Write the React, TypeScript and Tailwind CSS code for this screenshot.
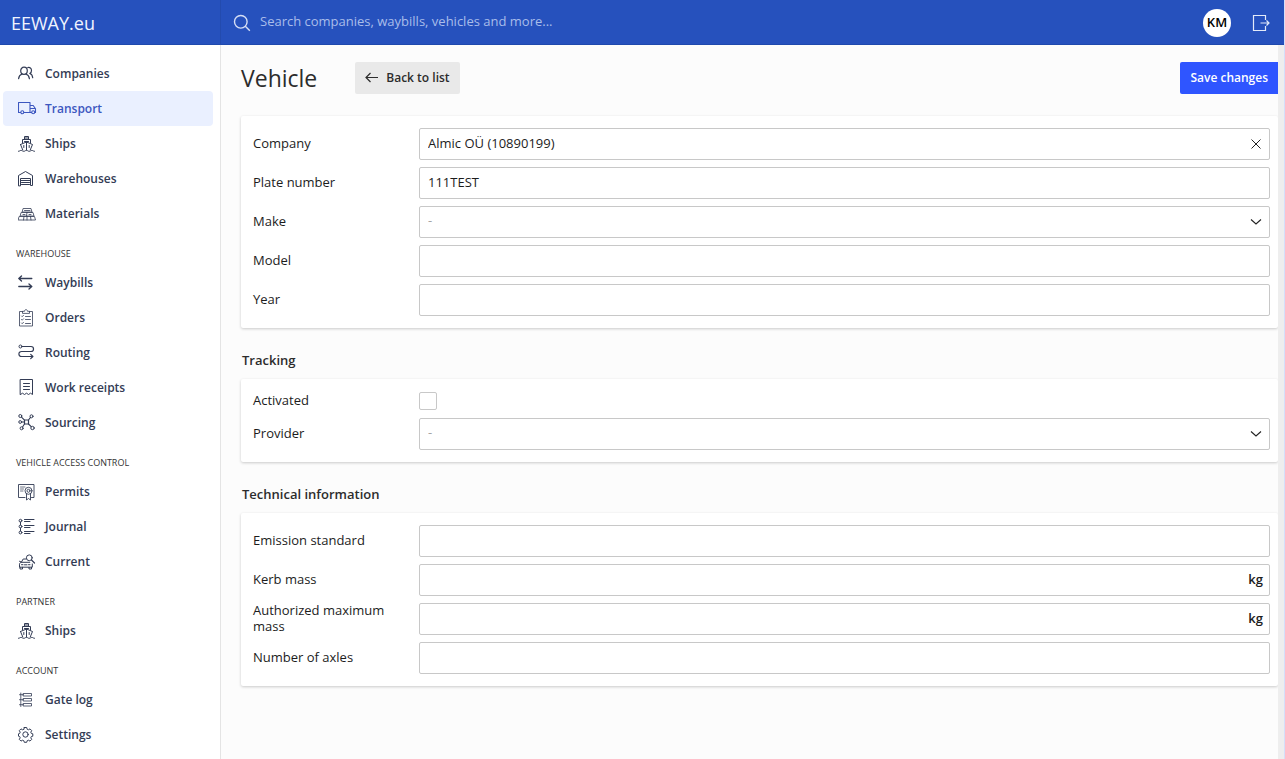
import React, { useState } from 'react';

type NavItem = {
   label: string;
   icon: React.ReactNode;
   active?: boolean;
};

type NavGroup = {
   title?: string;
   items: NavItem[];
};

const NavIcon = ({ children }: { children: React.ReactNode }) => (
   <svg
      className="h-[19px] w-[19px] shrink-0"
      viewBox="0 0 19 19"
      fill="none"
      stroke="currentColor"
      strokeWidth="1"
      strokeLinecap="round"
      strokeLinejoin="round"
      aria-hidden="true"
   >
      {children}
   </svg>
);

const CompaniesIcon = () => (
   <NavIcon>
      <ellipse cx="6" cy="6.8" rx="3.3" ry="3.6" strokeWidth="1.2" />
      <path
         d="M.6 14.6c.3-2.6 1.8-4 3.6-4.6M7.8 10c1.900.6 3.3 2 3.6 4.6M9.800 3.5c2-.6 3.7.8 3.7 2.9 0 1.4-.7 2.6-1.7 3.1 1.7.4 2.7 2 2.9 4.2"
         strokeWidth="1.2"
      />
   </NavIcon>
);

const TransportIcon = () => (
   <NavIcon>
      <path d="M2.5 13.500h-2v-10h11.500v10H6M12 6.500h3.200l2.300 3.300v3.700h-.6M12 9.500h5M13.500 13.500H12" strokeWidth="1.1" />
      <circle cx="4.300" cy="13.300" r="1.500" strokeWidth="1.1" />
      <circle cx="15.200" cy="13.300" r="1.500" strokeWidth="1.1" />
   </NavIcon>
);

const ShipIcon = () => (
   <NavIcon>
      <path d="M6.500 5.500v-3h4v3M6.500 4h4M4.500 8.800V5.500h8v3.300M8.500 8v8M2.500 10.500 8.500 8l6 2.500-2.200 5.300M2.500 10.500 4.700 15.800" />
      <path d="M6.500 7.500h4M5.800 11.500v2M11.200 11.500v2" />
      <path d="M.5 17.300c1.300 0 1.300-.9 2.600-.9s1.300.9 2.700.9 1.300-.9 2.700-.9 1.300.9 2.700.9 1.300-.9 2.600-.9 1.300.9 2.700.9" />
   </NavIcon>
);

const WarehouseIcon = () => (
   <NavIcon>
      <path d="M.5 16.500V6.500l7-4 7 4v10h-2v-7h-10v7zM2.500 11.500h10M3.500 13.500h8M3.500 15.500h8" />
   </NavIcon>
);

const MaterialsIcon = () => (
   <NavIcon>
      <path
         d="M5.500 4.500h7.500l1 3.500H4.500zM3.500 8.500h11.500l1 3.500H2.500zM1.500 12.500h15l1 3.500H.5zM9 8.500 8.500 12M6 12.500 5.500 16M9 12.500V16M12.500 12.500l.5 3.500M6.500 6.500h5.500M5 10.500h2M11 10.500h2"
         strokeWidth="0.8"
      />
   </NavIcon>
);

const WaybillsIcon = () => (
   <NavIcon>
      <path d="M13.800 5.500H.8M3.500 3 .8 5.500 3.500 8M.8 13.500h13M11 11l2.800 2.500L11 16" strokeWidth="1.3" />
   </NavIcon>
);

const OrdersIcon = () => (
   <NavIcon>
      <path d="M4.500 3.500h-3v14.500h13V3.500h-3M4.500 5V3.300h2c0-2.200 3-2.200 3 0h2V5z" strokeWidth="0.8" />
      <path d="m3.500 8 .7.7 1.300-1.400M3.500 11.500l.7.7 1.300-1.400M3.500 15l.7.7 1.300-1.400M7.500 8.500h5M7.500 11.500h5M7.500 15.500h5" strokeWidth="0.8" />
   </NavIcon>
);

const RoutingIcon = () => (
   <NavIcon>
      <circle cx="2.500" cy="3.500" r="1.500" />
      <path
         d="M4.200 3.500h8.800c3.400 0 3.400 5 0 5H3.600c-3.600 0-3.600 5 0 5h11.200M12.700 11.300l2.200 2.200-2.200 2.200"
         strokeWidth="1.2"
      />
   </NavIcon>
);

const ReceiptIcon = () => (
   <NavIcon>
      <path d="M2.500 1.500h12v15l-2-1.300-2 1.300-2-1.300-2 1.300-2-1.300-2 1.300zM5.500 5.500h6M5.500 8.500h6M5.500 11.500h6" />
   </NavIcon>
);

const SourcingIcon = () => (
   <NavIcon>
      <rect x="6.500" y="7" width="4" height="4" strokeWidth="1.2" />
      <path d="m3.500 4.200 3 3M10.500 7l2-2.600M6.500 11l-2 3M10.500 11l2.700 2.700M6.500 9H4" strokeWidth="1.1" />
      <circle cx="2.300" cy="3" r="1.500" />
      <circle cx="13.500" cy="3.300" r="1.500" />
      <circle cx="2.200" cy="9" r="1.400" />
      <circle cx="3.600" cy="15.300" r="1.500" />
      <circle cx="14.500" cy="15" r="1.700" />
   </NavIcon>
);

const PermitsIcon = () => (
   <NavIcon>
      <path d="M7 15.500H.5v-13h15.500v13h-2.500" strokeWidth="0.9" />
      <path d="M2.500 5h4.500M2.500 7h3M2.500 9h2.500" strokeWidth="0.7" />
      <circle cx="10.500" cy="8.800" r="3.500" strokeWidth="0.9" />
      <circle cx="10.500" cy="8.800" r="1.500" strokeWidth="0.9" />
      <path d="M8.500 12v6l2-1.500 2 1.500v-6" strokeWidth="0.9" />
   </NavIcon>
);

const JournalIcon = () => (
   <NavIcon>
      <path d="M2.500 5v3M2.500 11v3" />
      <circle cx="2.500" cy="3.700" r="1.400" />
      <circle cx="2.500" cy="9.500" r="1.400" />
      <circle cx="2.500" cy="15.500" r="1.400" />
      <path d="M6.500 2.500H16M6.500 4.500H12M6.500 8.500H16M6.500 10.500H12M6.500 14.500H16M6.500 16.500H12" />
   </NavIcon>
);

const CurrentIcon = () => (
   <NavIcon>
      <path d="M8 7H5.200L3.300 10.300h8.500M3.300 10.300c-1 .2-1.800.9-1.800 1.900v3h12.800V12M2 15.300V17h2.500v-1.700M11 15.300V17h2.500v-1.700M1.500 9.300l1.500.6M3.500 12.700H5M10.500 12.700H12M6.500 12.800H9" />
      <circle cx="11.300" cy="5.800" r="2.900" />
      <path d="m13.500 8 3 3" strokeWidth="1.2" />
   </NavIcon>
);

const GateLogIcon = () => (
   <NavIcon>
      <path
         d="M5.500 3.500h8v2.500h-8zM5.500 8.500h8V11h-8zM5.500 13.500h8V16h-8zM1.500 4.700h4M1.500 9.700h4M1.500 14.700h4M2.800 3v13.500"
         strokeWidth="0.8"
      />
   </NavIcon>
);

const SettingsIcon = () => (
   <NavIcon>
      <circle cx="7.500" cy="9.500" r="2.700" />
      <path d="M6.300 2.500h2.400l.5 1.800 1.200.5 1.600-.9 1.700 1.700-.9 1.600.5 1.200 1.500.4v2.400l-1.500.4-.5 1.200.9 1.600-1.700 1.700-1.600-.9-1.200.5-.5 1.600H6.300l-.5-1.600-1.200-.5-1.600.9-1.700-1.700.9-1.600-.5-1.200-1.200-.4V8.800l1.200-.4.5-1.200-.9-1.600L3 3.900l1.600.9 1.200-.5z" />
   </NavIcon>
);

const navigation: NavGroup[] = [
   {
      items: [
         { label: 'Companies', icon: <CompaniesIcon /> },
         { label: 'Transport', icon: <TransportIcon />, active: true },
         { label: 'Ships', icon: <ShipIcon /> },
         { label: 'Warehouses', icon: <WarehouseIcon /> },
         { label: 'Materials', icon: <MaterialsIcon /> },
      ],
   },
   {
      title: 'WAREHOUSE',
      items: [
         { label: 'Waybills', icon: <WaybillsIcon /> },
         { label: 'Orders', icon: <OrdersIcon /> },
         { label: 'Routing', icon: <RoutingIcon /> },
         { label: 'Work receipts', icon: <ReceiptIcon /> },
         { label: 'Sourcing', icon: <SourcingIcon /> },
      ],
   },
   {
      title: 'VEHICLE ACCESS CONTROL',
      items: [
         { label: 'Permits', icon: <PermitsIcon /> },
         { label: 'Journal', icon: <JournalIcon /> },
         { label: 'Current', icon: <CurrentIcon /> },
      ],
   },
   {
      title: 'PARTNER',
      items: [{ label: 'Ships', icon: <ShipIcon /> }],
   },
   {
      title: 'ACCOUNT',
      items: [
         { label: 'Gate log', icon: <GateLogIcon /> },
         { label: 'Settings', icon: <SettingsIcon /> },
      ],
   },
];

const inputClass =
   'block h-8 w-full rounded-xs border border-[#c8c8c8] bg-white px-2 pb-0.5 text-[13px] text-[#1c1c1c] outline-none focus:border-[#2f55ff]';

const Header = () => (
   <header className="flex h-[45px] shrink-0 bg-[#2651bd] text-white shadow-[inset_0_-1px_0_#1f49ad]">
      <div className="flex w-[221px] shrink-0 items-center border-r border-[#234bae] pl-[11px]">
         <a href="#" className="text-lg font-medium text-[#f0f4ff]">
            EEWAY.eu
         </a>
      </div>
      <div className="flex flex-1 items-center pl-3">
         <svg
            className="h-[18px] w-[18px] shrink-0"
            viewBox="0 0 18 18"
            fill="none"
            stroke="#d5def5"
            strokeWidth="1.4"
            aria-hidden="true"
         >
            <circle cx="7.800" cy="7.800" r="6.300" />
            <path d="m12.300 12.300 4.500 4.500" />
         </svg>
         <input
            type="search"
            aria-label="Search"
            placeholder="Search companies, waybills, vehicles and more..."
            className="ml-[9px] h-8 flex-1 bg-transparent pb-1 text-[13px] outline-none placeholder:text-[#a9bdea]"
         />
         <button
            type="button"
            className="h-7 w-7 rounded-full bg-white text-[13px] font-semibold text-black"
         >
            KM
         </button>
         <button type="button" aria-label="Log out" className="mr-3.5 ml-[21px]">
            <svg
               className="h-[18px] w-[18px]"
               viewBox="0 0 18 18"
               fill="none"
               stroke="#e3eaf9"
               strokeWidth="1.2"
               aria-hidden="true"
            >
               <path d="M13.500 6V1.500h-12v15h12V12M8.500 9h8.500M14.500 6.500 17 9l-2.500 2.500" />
            </svg>
         </button>
      </div>
   </header>
);

const Sidebar = () => (
   <nav className="w-[221px] shrink-0 border-r border-[#e4e4e4] bg-white pt-[11px] pr-[7px] pl-[3px]">
      {navigation.map((group, index) => (
         <div key={index}>
            {group.title && (
               <h2 className="h-[34px] pt-[15px] pl-[13px] text-[9px] leading-4 text-[#333]">
                  {group.title}
               </h2>
            )}
            {group.items.map((item) => (
               <a
                  key={item.label}
                  href="#"
                  className={`flex h-[35px] items-center gap-2 rounded-sm pl-[15px] text-xs font-semibold ${
                     item.active ? 'bg-[#eaf0ff] text-[#3c57c0]' : 'text-[#333c55]'
                  }`}
               >
                  {item.icon}
                  {item.label}
               </a>
            ))}
         </div>
      ))}
   </nav>
);

const Card = ({ children }: { children: React.ReactNode }) => (
   <div className="flex flex-col gap-[7px] rounded-xs bg-white py-3 pr-2 pl-3 shadow-[0_1px_3px_rgba(0,0,0,0.2)]">
      {children}
   </div>
);

type RowProps = {
   id: string;
   label: string;
   children: React.ReactNode;
};

const Row = ({ id, label, children }: RowProps) => (
   <div className="flex items-center">
      <label htmlFor={id} className="-my-1 w-[166px] shrink-0 pr-5 pb-0.5 text-[13px] leading-4 text-[#1c1c1c]">
         {label}
      </label>
      <div className="relative flex-1">{children}</div>
   </div>
);

const SelectField = ({ id }: { id: string }) => (
   <>
      <select id={id} className={`${inputClass} appearance-none text-[#a5a5a5]`}>
         <option>-</option>
      </select>
      <svg
         className="pointer-events-none absolute top-2.5 right-2 h-3 w-3"
         viewBox="0 0 12 12"
         fill="none"
         stroke="#222"
         strokeWidth="1.1"
         aria-hidden="true"
      >
         <path d="m1 3.500 5 4.500 5-4.500" />
      </svg>
   </>
);

const MassField = ({ id }: { id: string }) => (
   <>
      <input id={id} type="text" className={`${inputClass} pr-8`} />
      <span className="pointer-events-none absolute top-[5px] right-[7px] text-[13px] leading-5 font-semibold text-[#1c1c1c]">
         kg
      </span>
   </>
);

const SectionTitle = ({ children }: { children: React.ReactNode }) => (
   <h2 className="h-[51px] pt-[23px] pl-px text-[13px] leading-[18px] font-semibold text-[#2c2c2c]">
      {children}
   </h2>
);

const App = () => {
   const [company, setCompany] = useState<string>('Almic OÜ (10890199)');

   return (
      <div className="flex min-h-screen border-r border-[#d5dffa] bg-[#fcfcfc] font-['Open_Sans',sans-serif]">
         <div className="flex min-w-0 flex-1 flex-col">
            <Header />
            <div className="flex flex-1">
               <Sidebar />
               <main className="min-w-0 flex-1 overflow-hidden pl-5">
                  {/* Title bar */}
                  <div className="flex h-[71px] items-center pb-[5px]">
                     <h1 className="text-[23px] text-[#2c2c2c]">Vehicle</h1>
                     <button
                        type="button"
                        className="ml-[38px] flex h-8 items-center gap-2 rounded-xs bg-[#e9e9e9] px-2.5 text-xs font-semibold text-[#2c2c2c]"
                     >
                        <svg
                           className="h-3 w-[13px]"
                           viewBox="0 0 13 12"
                           fill="none"
                           stroke="currentColor"
                           strokeWidth="1.2"
                           aria-hidden="true"
                        >
                           <path d="M13 5.500H1M5.500 1 1 5.500 5.500 10" />
                        </svg>
                        Back to list
                     </button>
                     <button
                        type="button"
                        className="ml-auto h-8 rounded-l-xs bg-[#2f55ff] px-2.5 text-xs font-semibold text-white"
                     >
                        Save changes
                     </button>
                  </div>

                  <Card>
                     <Row id="company" label="Company">
                        <input
                           id="company"
                           type="text"
                           value={company}
                           onChange={(e) => setCompany(e.target.value)}
                           className={inputClass}
                        />
                        <button
                           type="button"
                           aria-label="Clear company"
                           className="absolute top-2.5 right-2"
                           onClick={() => setCompany('')}
                        >
                           <svg
                              className="h-3 w-3"
                              viewBox="0 0 12 12"
                              stroke="#222"
                              strokeWidth="1"
                              aria-hidden="true"
                           >
                              <path d="m1.500 1.500 9 9M10.500 1.500l-9 9" />
                           </svg>
                        </button>
                     </Row>
                     <Row id="plate" label="Plate number">
                        <input id="plate" type="text" defaultValue="111TEST" className={inputClass} />
                     </Row>
                     <Row id="make" label="Make">
                        <SelectField id="make" />
                     </Row>
                     <Row id="model" label="Model">
                        <input id="model" type="text" className={inputClass} />
                     </Row>
                     <Row id="year" label="Year">
                        <input id="year" type="text" className={inputClass} />
                     </Row>
                  </Card>

                  <SectionTitle>Tracking</SectionTitle>
                  <Card>
                     <Row id="activated" label="Activated">
                        <input
                           id="activated"
                           type="checkbox"
                           className="my-px block h-[18px] w-[18px] appearance-none rounded-xs border border-[#c8c8c8] bg-white checked:bg-[#2f55ff]"
                        />
                     </Row>
                     <Row id="provider" label="Provider">
                        <SelectField id="provider" />
                     </Row>
                  </Card>

                  <SectionTitle>Technical information</SectionTitle>
                  <Card>
                     <Row id="emission" label="Emission standard">
                        <input id="emission" type="text" className={inputClass} />
                     </Row>
                     <Row id="kerb" label="Kerb mass">
                        <MassField id="kerb" />
                     </Row>
                     <Row id="max-mass" label="Authorized maximum mass">
                        <MassField id="max-mass" />
                     </Row>
                     <Row id="axles" label="Number of axles">
                        <input id="axles" type="text" className={inputClass} />
                     </Row>
                  </Card>
               </main>
               {/* Scroll track */}
               <div className="w-1.5 shrink-0 bg-[#eee]" />
            </div>
         </div>
      </div>
   );
};

export default App;
